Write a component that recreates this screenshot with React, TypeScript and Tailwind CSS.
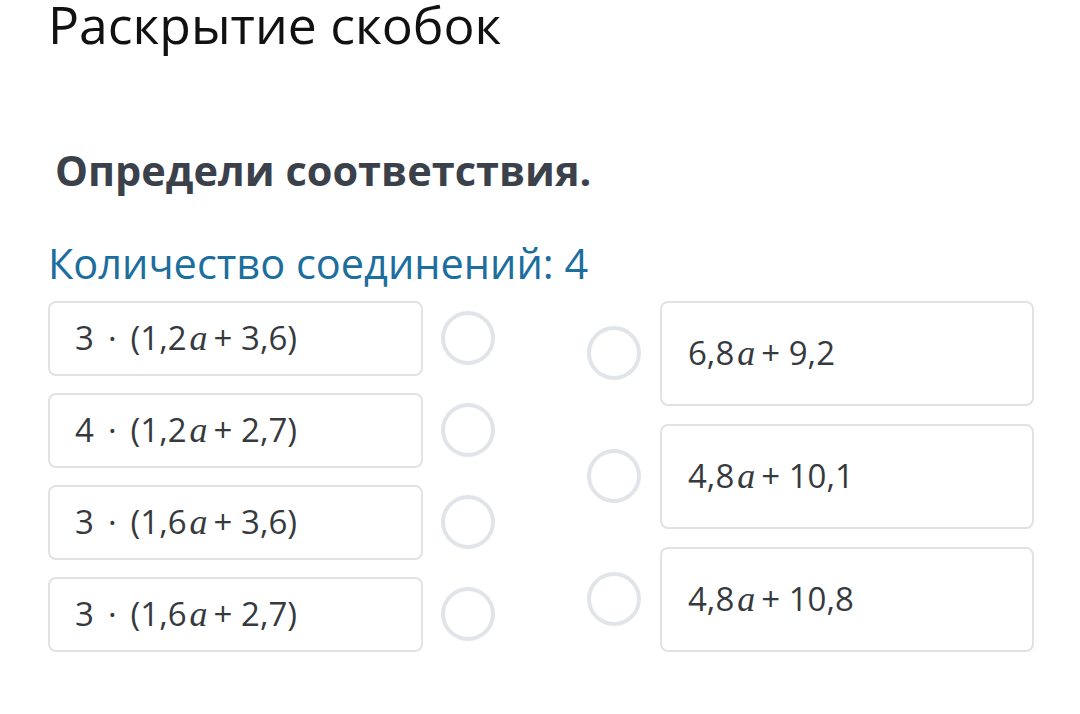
import React from "react";

const Var = () => (
  <span
    className="italic text-[36px] ml-[3px] mr-[6px]"
    style={{ fontFamily: '"Liberation Serif", "DejaVu Serif", serif' }}
  >
    a
  </span>
);

const Circle = () => (
  <div className="w-[54px] h-[54px] shrink-0 rounded-full border-[4px] border-[#e1e4e8] bg-white" />
);

const leftItems: [string, string, string][] = [
  ["3", "1,2", "3,6"],
  ["4", "1,2", "2,7"],
  ["3", "1,6", "3,6"],
  ["3", "1,6", "2,7"],
];

const rightItems: [string, string][] = [
  ["6,8", "9,2"],
  ["4,8", "10,1"],
  ["4,8", "10,8"],
];

export default function App() {
  return (
    <div
      className="w-[1080px] h-[714px] overflow-hidden bg-white text-[#2f2f2f]"
      style={{ fontFamily: '"Open Sans", "Noto Sans", sans-serif' }}
    >
      <div className="pl-[48px]">
        <h1 className="text-[51.7px] leading-[48px] font-normal text-[#111]">
          Раскрытие скобок
        </h1>
        <h2 className="mt-[101px] ml-[7px] text-[41.5px] leading-[42px] font-bold text-[#3b414b]">
          Определи соответствия.
        </h2>
        <div className="mt-[52px] text-[41.5px] leading-[41.5px] text-[#1b6e9d]">
          Количество соединений: 4
        </div>
        <div className="mt-[16px] flex">
          <div className="flex flex-col gap-[17px]">
            {leftItems.map(([k, b, c], i) => (
              <div key={i} className="flex items-center gap-[18px]">
                <div className="w-[375px] h-[75px] rounded-[8px] border-2 border-[#e2e2e2] flex items-center pl-[25px] text-[33px] leading-[40px] text-[#363a3e]">
                  <span>{k}</span>
                  <span className="ml-[14px] mr-[14px]">·</span>
                  <span>
                    ({b}
                    <Var />+ {c})
                  </span>
                </div>
                <Circle />
              </div>
            ))}
          </div>
          <div className="ml-[92px] flex flex-col gap-[18px]">
            {rightItems.map(([b, c], i) => (
              <div key={i} className="flex items-center gap-[19px]">
                <Circle />
                <div className="w-[374px] h-[105px] rounded-[8px] border-2 border-[#e2e2e2] flex items-center pl-[26px] text-[33px] leading-[40px] text-[#363a3e]">
                  <span>
                    {b}
                    <Var />+ {c}
                  </span>
                </div>
              </div>
            ))}
          </div>
        </div>
      </div>
    </div>
  );
}
